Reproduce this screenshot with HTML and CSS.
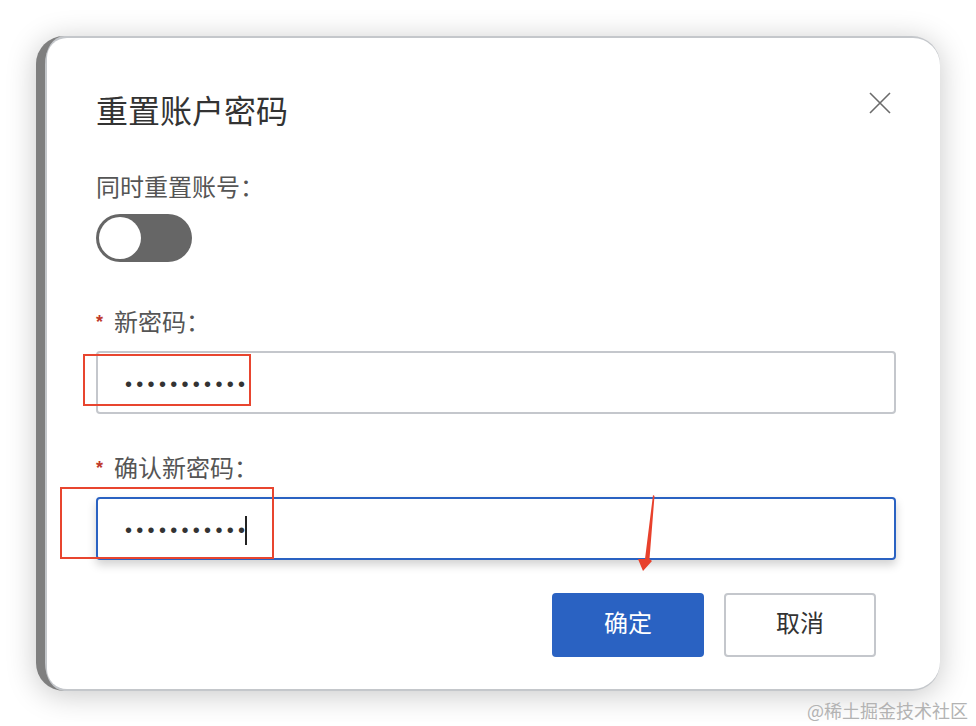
FILE: index.html
```html
<!DOCTYPE html>
<html lang="zh-CN">
<head>
    <meta charset="UTF-8">
    <meta name="viewport" content="width=device-width, initial-scale=1.0">
    <title>重置账户密码</title>
    <link rel="stylesheet" href="styles.css">
</head>
<body>

    <!-- Dialog frame (backdrop edge shows on the left) -->
    <div class="frame">
        <div class="dialog">

            <!-- Header -->
            <div class="dialog-header">
                <h2 class="dialog-title">重置账户密码</h2>
                <button class="close-btn" aria-label="关闭">
                    <svg width="24" height="24" viewBox="0 0 24 24">
                        <path d="M2 2 L22 22 M22 2 L2 22" stroke="#6b6b6b" stroke-width="1.6" fill="none"/>
                    </svg>
                </button>
            </div>

            <!-- Reset account switch -->
            <div class="form-item first">
                <label class="form-label">同时重置账号：</label>
                <div class="switch"><span class="switch-knob"></span></div>
            </div>

            <!-- New password -->
            <div class="form-item">
                <label class="form-label"><span class="required">*</span>新密码：</label>
                <div class="input">
                    <span class="dots">•••••••••••</span>
                    <span class="mark mark-one"></span>
                </div>
            </div>

            <!-- Confirm password -->
            <div class="form-item confirm">
                <label class="form-label"><span class="required">*</span>确认新密码：</label>
                <div class="input focused">
                    <span class="dots">•••••••••••</span><span class="caret"></span>
                    <span class="mark mark-two"></span>
                    <svg class="arrow" width="20" height="80" viewBox="0 0 20 80">
                        <polygon points="17,2 18.5,3 13.5,66 16,68 7,78 2,66 9,66" fill="#e8412c"/>
                    </svg>
                </div>
            </div>

            <!-- Footer buttons -->
            <div class="dialog-footer">
                <button class="btn btn-primary">确定</button>
                <button class="btn btn-default">取消</button>
            </div>

        </div>
    </div>

    <div class="watermark">@稀土掘金技术社区</div>

</body>
</html>
```

FILE: styles.css
```css
/* General styles */
body {
    margin: 0;
    padding: 36px 8px 0 36px;
    background-color: #fff;
    font-family: "Noto Sans CJK SC", "Noto Sans", sans-serif;
    color: #333;
}

/* Frame around the dialog */
.frame {
    box-sizing: border-box;
    width: 904px;
    background-color: #c4c7cb;
    border-left: 9px solid #7f7f7f;
    border-radius: 28px;
    padding: 2px 0 2px 2px;
    box-shadow: 0 4px 30px rgba(0, 0, 0, 0.22);
}

.dialog {
    background-color: #fff;
    border-radius: 20px 27px 27px 20px;
    padding: 55px 44px 32px 49px;
}

/* Header */
.dialog-header {
    display: flex;
    justify-content: space-between;
    align-items: flex-start;
}

.dialog-title {
    margin: 0;
    font-size: 32px;
    line-height: 32px;
    font-weight: 400;
    color: #333;
}

.close-btn {
    background: transparent;
    border: none;
    padding: 0;
    margin: -2px 4px 0 0;
    width: 24px;
    height: 24px;
    cursor: pointer;
}

.close-btn svg {
    display: block;
}

/* Form items */
.form-item {
    margin-top: 47px;
}

.form-item.first {
    margin-top: 49px;
}

.form-item.confirm {
    margin-top: 41px;
}

.form-label {
    display: block;
    font-size: 24px;
    line-height: 24px;
    color: #555;
    margin-bottom: 17px;
}

.form-item.first .form-label {
    margin-bottom: 16px;
}

.required {
    color: #c0392b;
    font-family: "Liberation Sans", sans-serif;
    font-size: 18px;
    font-weight: bold;
    vertical-align: 3px;
    margin-right: 11px;
}

/* Switch */
.switch {
    width: 96px;
    height: 48px;
    border-radius: 24px;
    background-color: #666;
    position: relative;
}

.switch-knob {
    position: absolute;
    top: 3px;
    left: 3px;
    width: 42px;
    height: 42px;
    border-radius: 50%;
    background-color: #fff;
}

/* Inputs */
.input {
    position: relative;
    box-sizing: border-box;
    height: 63px;
    border: 2px solid #c4c7cc;
    border-radius: 4px;
    padding-left: 27px;
    display: flex;
    align-items: center;
}

.input.focused {
    border-color: #2a62c2;
    box-shadow: 0 5px 10px rgba(0, 0, 0, 0.18);
}

.dots {
    font-family: "Liberation Sans", sans-serif;
    font-size: 20px;
    letter-spacing: 4.3px;
    color: #333;
    margin-top: 4px;
}

.caret {
    width: 2px;
    height: 29px;
    background-color: #222;
    margin-left: -4px;
    margin-top: 4px;
}

/* Red annotation marks */
.mark {
    position: absolute;
    border: 2px solid #e8452f;
    box-sizing: border-box;
}

.mark-one {
    left: -15px;
    top: 1px;
    width: 168px;
    height: 52px;
}

.mark-two {
    left: -38px;
    top: -12px;
    width: 214px;
    height: 72px;
}

.arrow {
    position: absolute;
    left: 538px;
    top: -6px;
}

/* Footer */
.dialog-footer {
    display: flex;
    justify-content: flex-end;
    gap: 20px;
    margin-top: 33px;
    padding-right: 20px;
}

.btn {
    box-sizing: border-box;
    width: 152px;
    height: 64px;
    border-radius: 4px;
    padding: 0 0 6px;
    font-family: "Noto Sans CJK SC", sans-serif;
    font-size: 24px;
    line-height: 24px;
    cursor: pointer;
}

.btn-primary {
    background-color: #2a62c2;
    border: none;
    color: #fff;
}

.btn-default {
    background-color: #fff;
    border: 2px solid #c4c7cc;
    color: #333;
}

/* Watermark */
.watermark {
    text-align: right;
    font-size: 18px;
    line-height: 24px;
    color: #b3b3b3;
    margin-top: 7px;
}
```
